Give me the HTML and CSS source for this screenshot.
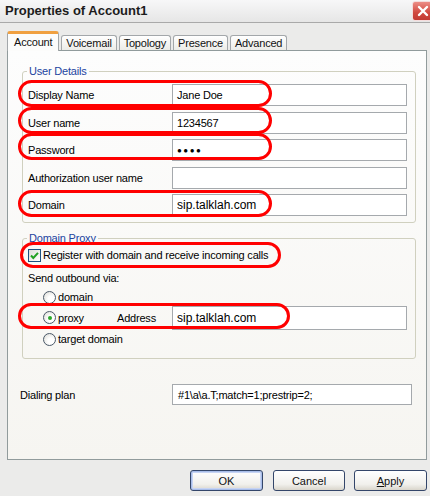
FILE: index.html
```html
<!DOCTYPE html>
<html lang="en">
<head>
  <meta charset="UTF-8">
  <title>Properties of Account1</title>
  <link rel="stylesheet" href="styles.css">
</head>
<body>
<div class="window">
  <div class="titlebar">
    <span class="title">Properties of Account1</span>
    <span class="close">
      <svg width="12" height="12" viewBox="0 0 12 12"><path d="M2 2L10 10M10 2L2 10" stroke="#fff" stroke-width="2.4" stroke-linecap="round"/></svg>
    </span>
  </div>

  <div class="content">
    <div class="tabs">
      <div class="tab active">Account</div>
      <div class="tab">Voicemail</div>
      <div class="tab">Topology</div>
      <div class="tab">Presence</div>
      <div class="tab">Advanced</div>
    </div>

    <div class="panel">
      <fieldset class="group details">
        <legend>User Details</legend>
        <div class="form">
          <span class="label">Display Name</span><div class="field">Jane Doe</div>
          <span class="label">User name</span><div class="field">1234567</div>
          <span class="label">Password</span><div class="field"><span class="dots">●●●●</span></div>
          <span class="label">Authorization user name</span><div class="field"></div>
          <span class="label">Domain</span><div class="field big">sip.talklah.com</div>
        </div>
      </fieldset>

      <fieldset class="group proxy">
        <legend>Domain Proxy</legend>
        <div class="check-row">
          <span class="checkbox">
            <svg width="11" height="11" viewBox="0 0 11 11"><path d="M2 5.5L4.3 8L9 2.8" fill="none" stroke="#21a121" stroke-width="2"/></svg>
          </span>
          <span>Register with domain and receive incoming calls</span>
        </div>
        <div class="send">Send outbound via:</div>
        <div class="options">
          <div class="opt"><span class="radio"></span><span>domain</span></div>
          <div class="opt opt-proxy">
            <span class="radio on"></span><span class="opt-text">proxy</span>
            <span class="addr">Address</span>
            <div class="field big">sip.talklah.com</div>
          </div>
          <div class="opt opt-last"><span class="radio"></span><span>target domain</span></div>
        </div>
      </fieldset>

      <div class="dialing">
        <span class="label">Dialing plan</span>
        <div class="field">#1\a\a.T;match=1;prestrip=2;</div>
      </div>
    </div>

    <div class="buttons">
      <button class="btn default">OK</button>
      <button class="btn cancel">Cancel</button>
      <button class="btn"><u>A</u>pply</button>
    </div>
  </div>

  <!-- red annotation rings -->
  <div class="mark m-display"></div>
  <div class="mark m-user"></div>
  <div class="mark m-pass"></div>
  <div class="mark m-domain"></div>
  <div class="mark m-register"></div>
  <div class="mark m-proxy"></div>
</div>
</body>
</html>
```

FILE: styles.css
```css
*{
  margin: 0;
  padding: 0;
  box-sizing: border-box;
}
body{
  width: 430px;
  height: 496px;
  overflow: hidden;
  background: #ebebea;
  font: 11px "Liberation Sans", Arial, sans-serif;
  letter-spacing: -0.2px;
  color: #000;
}
.window{
  position: relative;
  height: 496px;
}

/* title bar */
.titlebar{
  height: 23px;
  display: flex;
  justify-content: space-between;
  align-items: flex-start;
  padding-left: 5px;
  background: linear-gradient(#f7f7f8, #e6e6e6);
  border-bottom: 1px solid #a9a9a9;
}
.title{
  font-size: 13px;
  font-weight: bold;
  line-height: 22px;
  letter-spacing: 0;
  color: #1c1c1c;
}
.close{
  width: 21px;
  height: 20px;
  margin-top: 1px;
  margin-right: -3px;
  border: 1px solid #f4dcdc;
  border-radius: 3px;
  background: linear-gradient(#ec8d86, #d0483f 60%, #c23a33);
  display: flex;
  align-items: center;
  justify-content: center;
}

.content{
  padding: 8px 3px 0 7px;
}

/* tabs */
.tabs{
  height: 19px;
  display: flex;
  align-items: flex-end;
  gap: 2px;
}
.tab{
  height: 15px;
  padding: 0 4px;
  line-height: 14px;
  border: 1px solid #a3a7aa;
  border-bottom: none;
  border-radius: 3px 3px 0 0;
  background: linear-gradient(#ffffff, #ecece8);
  color: #111;
}
.tab.active{
  height: 20px;
  margin-bottom: -1px;
  padding: 0 6px;
  line-height: 16px;
  border-top: 3px solid #f0a040;
  background: #fcfcfb;
  position: relative;
  z-index: 1;
}

/* panel */
.panel{
  height: 410px;
  border: 1px solid #919b9c;
  background: linear-gradient(#fdfdfd, #f6f5f1);
  padding: 13px 10px 0 14px;
}
.group{
  border: 1px solid #d0d0bf;
  border-radius: 3px;
  padding: 0 8px 6px 5px;
}
.group legend{
  padding: 0 2px;
  margin-left: -1px;
  line-height: 14px;
  color: #2244a0;
}
.form{
  display: grid;
  grid-template-columns: 144px 1fr;
  row-gap: 5.5px;
  padding-top: 6px;
}
.label{
  align-self: center;
}
.field{
  height: 22px;
  border: 1px solid #a5a9ad;
  background: #fff;
  padding-left: 4px;
  display: flex;
  align-items: center;
  font-size: 11px;
  white-space: nowrap;
}
.field.big{
  font-size: 12px;
  letter-spacing: 0;
}
.dots{
  font-size: 8px;
  letter-spacing: 1.5px;
}

.proxy{
  margin-top: 8px;
  padding-bottom: 11px;
}
.check-row{
  height: 16px;
  margin-top: 2px;
  display: flex;
  align-items: center;
  gap: 2px;
}
.checkbox{
  width: 13px;
  height: 13px;
  border: 1px solid #1c5180;
  background: linear-gradient(135deg, #dcdcd7, #fff);
  display: flex;
  align-items: center;
  justify-content: center;
}
.send{
  height: 16px;
  line-height: 16px;
  margin-top: 7px;
}
.options{
  margin-left: 15px;
}
.opt{
  height: 16px;
  display: flex;
  align-items: center;
  margin-top: 3px;
}
.opt .radio{
  margin-right: 2px;
}
.opt-proxy{
  height: 23px;
  margin-top: 1px;
}
.opt-proxy .field{
  flex: 1;
  height: 24px;
}
.opt-last{
  margin-top: 2px;
}
.opt-text{
  width: 59px;
}
.addr{
  width: 55px;
}
.radio{
  width: 13px;
  height: 13px;
  border: 1px solid #4a5868;
  border-radius: 50%;
  background: radial-gradient(circle at 65% 65%, #fff 30%, #d8d8d2);
  position: relative;
}
.radio.on::after{
  content: "";
  position: absolute;
  left: 3.5px;
  top: 3.5px;
  width: 4px;
  height: 4px;
  border-radius: 50%;
  background: #29a829;
}

.dialing{
  display: grid;
  grid-template-columns: 152px 1fr;
  margin: 25px 4px 0 -2px;
}
.dialing .field{
  height: 21px;
  padding-left: 5px;
}

/* buttons */
.buttons{
  display: flex;
  justify-content: flex-end;
  margin-top: 10px;
}
.btn{
  width: 73px;
  height: 21px;
  margin-left: 9px;
  border: 1px solid #34466a;
  border-radius: 3px;
  background: linear-gradient(#ffffff, #f1f0ec 70%, #d9d5cb);
  font: 11px "Liberation Sans", Arial, sans-serif;
  color: #111;
}
.btn.default{
  box-shadow: inset 0 0 0 1px #a8bde9, inset 0 0 0 2px #c7d4f3;
}
.btn.cancel{
  width: 72px;
  margin-left: 10px;
}

/* red annotation rings drawn over the form */
.mark{
  position: absolute;
  border: 3px solid #f00;
  border-radius: 14px;
  pointer-events: none;
}
.m-display{ left: 18px; top: 80px; width: 254px; height: 27px; }
.m-user{ left: 18px; top: 107px; width: 254px; height: 27px; }
.m-pass{ left: 18px; top: 133px; width: 254px; height: 27px; }
.m-domain{ left: 18px; top: 190px; width: 254px; height: 27px; }
.m-register{ left: 20px; top: 242px; width: 261px; height: 26px; }
.m-proxy{ left: 18px; top: 303px; width: 272px; height: 26px; }
```
